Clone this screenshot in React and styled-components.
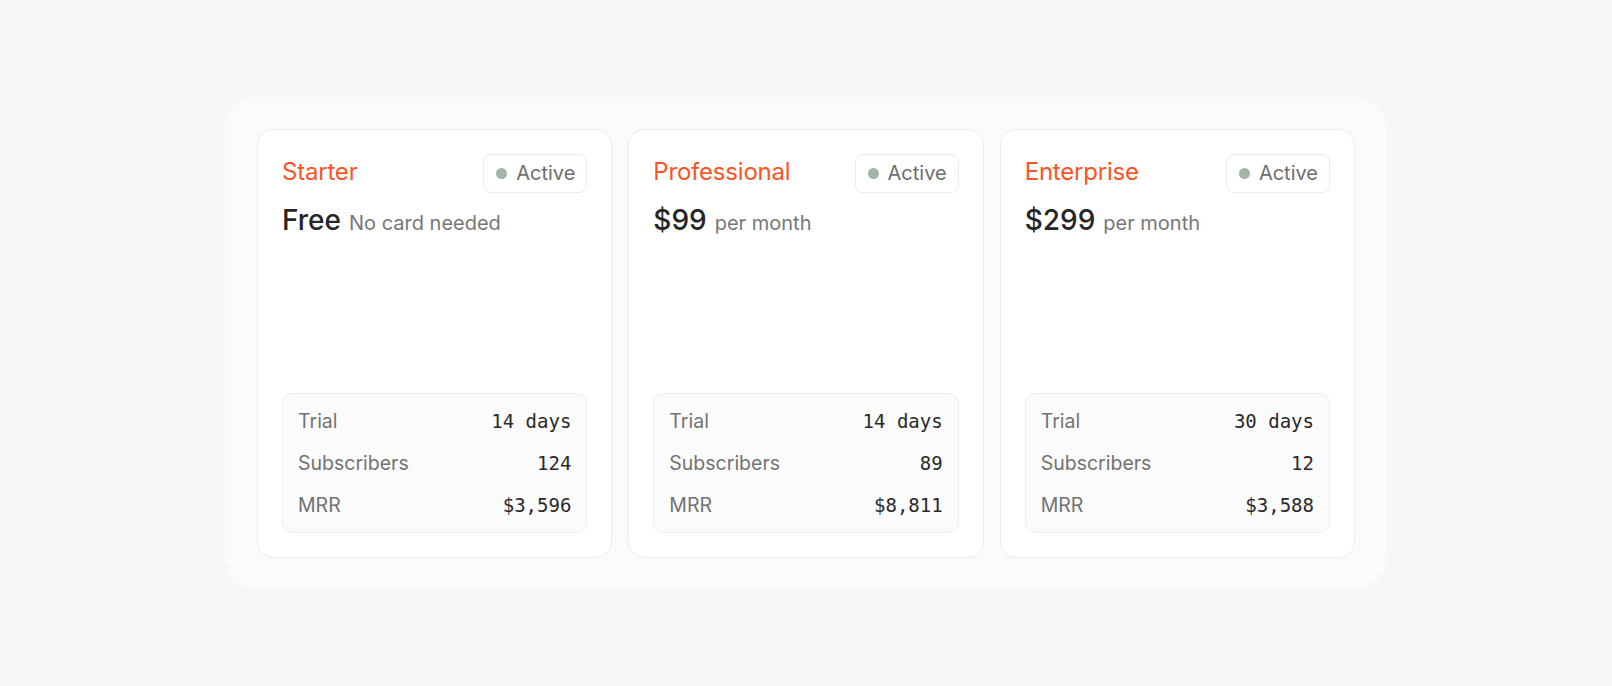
import styled, { createGlobalStyle } from "styled-components";

const plans = [
  {
    name: "Starter",
    price: "Free",
    note: "No card needed",
    stats: [
      ["Trial", "14 days"],
      ["Subscribers", "124"],
      ["MRR", "$3,596"],
    ],
  },
  {
    name: "Professional",
    price: "$99",
    note: "per month",
    stats: [
      ["Trial", "14 days"],
      ["Subscribers", "89"],
      ["MRR", "$8,811"],
    ],
  },
  {
    name: "Enterprise",
    price: "$299",
    note: "per month",
    stats: [
      ["Trial", "30 days"],
      ["Subscribers", "12"],
      ["MRR", "$3,588"],
    ],
  },
];

const GlobalStyle = createGlobalStyle`
  body {
    margin: 0;
    background: #f7f7f7;
    font-family: Inter, "Noto Sans", sans-serif;
  }
`;

const Page = styled.div`
  min-height: 100vh;
  display: flex;
  align-items: center;
  justify-content: center;
`;

const Panel = styled.div`
  width: 1162px;
  box-sizing: border-box;
  padding: 32px;
  border-radius: 32px;
  background-color: #fbfbfb;
  background-image: radial-gradient(#f4f4f4 0.6px, transparent 0.8px);
  background-size: 4px 4px;
  display: grid;
  grid-template-columns: repeat(3, 1fr);
  gap: 16px;
`;

const Card = styled.div`
  height: 429px;
  box-sizing: border-box;
  padding: 24px;
  background: #fff;
  border: 1px solid #ededed;
  border-radius: 16px;
  display: flex;
  flex-direction: column;
`;

const Header = styled.div`
  display: flex;
  align-items: center;
  justify-content: space-between;
`;

const Name = styled.span`
  color: #fb5424;
  font-size: 24px;
  line-height: 28px;
  letter-spacing: -0.2px;
  margin-top: -2px;
`;

const Badge = styled.div`
  height: 39px;
  box-sizing: border-box;
  padding: 0 11px 0 12px;
  display: flex;
  align-items: center;
  gap: 9px;
  border: 1px solid #ececec;
  border-radius: 8px;
  color: #6e6e6e;
  font-size: 20px;
`;

const Dot = styled.span`
  width: 11px;
  height: 11px;
  border-radius: 50%;
  background: #a2b5a4;
`;

const PriceRow = styled.div`
  margin-top: 9px;
  display: flex;
  align-items: baseline;
  gap: 8px;
  line-height: 36px;
`;

const Price = styled.span`
  color: #262626;
  font-size: 28px;
  font-weight: 500;
`;

const Note = styled.span`
  color: #777;
  font-size: 20px;
`;

const Stats = styled.div`
  margin-top: auto;
  padding: 13px 15px;
  background: #fbfbfb;
  border: 1px solid #eeeeee;
  border-radius: 10px;
  display: flex;
  flex-direction: column;
  gap: 14px;
`;

const StatRow = styled.div`
  display: flex;
  justify-content: space-between;
  align-items: baseline;
  line-height: 28px;
`;

const Label = styled.span`
  color: #727272;
  font-size: 19.5px;
`;

const Value = styled.span`
  color: #2a2a2a;
  font-family: "DejaVu Sans Mono", "Liberation Mono", monospace;
  font-size: 19px;
`;

const App = () => {
  return (
    <Page>
      <GlobalStyle />
      <Panel>
        {plans.map((plan) => (
          <Card key={plan.name}>
            <Header>
              <Name>{plan.name}</Name>
              <Badge>
                <Dot />
                Active
              </Badge>
            </Header>
            <PriceRow>
              <Price>{plan.price}</Price>
              <Note>{plan.note}</Note>
            </PriceRow>
            <Stats>
              {plan.stats.map(([label, value]) => (
                <StatRow key={label}>
                  <Label>{label}</Label>
                  <Value>{value}</Value>
                </StatRow>
              ))}
            </Stats>
          </Card>
        ))}
      </Panel>
    </Page>
  );
};

export default App;
